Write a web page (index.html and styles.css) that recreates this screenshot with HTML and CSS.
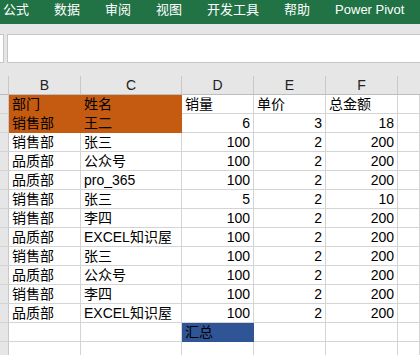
FILE: index.html
```html
<!DOCTYPE html>
<html lang="zh-CN">
<head>
    <meta charset="UTF-8">
    <title>销售表</title>
    <link rel="stylesheet" href="styles.css">
</head>
<body>
    <div class="ribbon">
        <span>公式</span>
        <span>数据</span>
        <span>审阅</span>
        <span>视图</span>
        <span>开发工具</span>
        <span>帮助</span>
        <span>Power Pivot</span>
    </div>

    <div class="barra">
        <div class="nome"></div>
        <div class="formula"></div>
    </div>

    <div class="planilha">
        <div class="cab"></div><div class="cab">B</div><div class="cab">C</div><div class="cab">D</div><div class="cab">E</div><div class="cab">F</div><div class="cab fim"></div>

        <div class="lin"></div><div class="laranja">部门</div><div class="laranja">姓名</div><div>销量</div><div>单价</div><div>总金额</div><div></div>
        <div class="lin"></div><div class="laranja">销售部</div><div class="laranja">王二</div><div class="num">6</div><div class="num">3</div><div class="num">18</div><div></div>
        <div class="lin"></div><div>销售部</div><div>张三</div><div class="num">100</div><div class="num">2</div><div class="num">200</div><div></div>
        <div class="lin"></div><div>品质部</div><div>公众号</div><div class="num">100</div><div class="num">2</div><div class="num">200</div><div></div>
        <div class="lin"></div><div>品质部</div><div>pro_365</div><div class="num">100</div><div class="num">2</div><div class="num">200</div><div></div>
        <div class="lin"></div><div>销售部</div><div>张三</div><div class="num">5</div><div class="num">2</div><div class="num">10</div><div></div>
        <div class="lin"></div><div>销售部</div><div>李四</div><div class="num">100</div><div class="num">2</div><div class="num">200</div><div></div>
        <div class="lin"></div><div>品质部</div><div>EXCEL知识屋</div><div class="num">100</div><div class="num">2</div><div class="num">200</div><div></div>
        <div class="lin"></div><div>销售部</div><div>张三</div><div class="num">100</div><div class="num">2</div><div class="num">200</div><div></div>
        <div class="lin"></div><div>品质部</div><div>公众号</div><div class="num">100</div><div class="num">2</div><div class="num">200</div><div></div>
        <div class="lin"></div><div>销售部</div><div>李四</div><div class="num">100</div><div class="num">2</div><div class="num">200</div><div></div>
        <div class="lin"></div><div>品质部</div><div>EXCEL知识屋</div><div class="num">100</div><div class="num">2</div><div class="num">200</div><div></div>
        <div class="lin"></div><div></div><div></div><div class="azul">汇总</div><div></div><div></div><div></div>
        <div class="lin"></div><div></div><div></div><div></div><div></div><div></div><div></div>
    </div>
</body>
</html>
```

FILE: styles.css
```css
body{
    margin: 0;
    width: 420px;
    height: 355px;
    overflow: hidden;
    background: #e6e6e6;
    font-family: "Liberation Sans", "Noto Sans CJK SC", sans-serif;
}

.ribbon{
    height: 24px;
    background: #217346;
    color: white;
    font-size: 13px;
    display: flex;
    gap: 25px;
    padding-left: 3px;
    line-height: 20px;
    white-space: nowrap;
}

.barra{
    display: flex;
    gap: 3px;
    padding: 10px 0 10px 0;
    height: 29px;
}

.nome{
    width: 3px;
    background: white;
    border: 1px solid #c6c6c6;
    border-left: none;
}

.formula{
    flex: 1;
    background: white;
    border: 1px solid #c6c6c6;
    border-right: none;
}

.planilha{
    margin-top: 3px;
    display: grid;
    grid-template-columns: 9px 72px 101px 72px 72px 72px 1fr;
    grid-auto-rows: 19px;
    font-size: 14px;
    color: black;
}

.planilha div{
    box-sizing: border-box;
    border-right: 1px solid #d4d4d4;
    border-bottom: 1px solid #d4d4d4;
    background: white;
    padding: 0 3px;
    line-height: 18px;
    white-space: nowrap;
    overflow: hidden;
}

.planilha .cab{
    background: #e6e6e6;
    text-align: center;
    color: #222;
    border-right-color: #c8c8c8;
    border-bottom-color: #bdbdbd;
}

.planilha .cab.fim{
    border-right: none;
}

.planilha .lin{
    padding: 0;
    background: #e6e6e6;
    border-right-color: #c8c8c8;
    border-bottom-color: #d4d4d4;
}

.planilha .num{
    text-align: right;
}

.planilha .laranja{
    background: #c55a11;
    border-color: #c55a11;
}

.planilha .azul{
    background: #2f5597;
    border-color: #2f5597;
}
```
